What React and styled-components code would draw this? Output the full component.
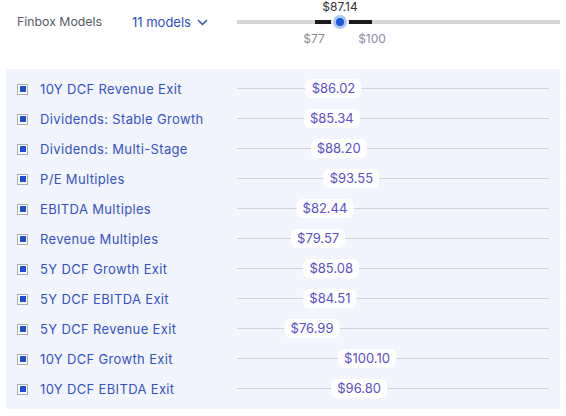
import React from "react";
import styled, { createGlobalStyle } from "styled-components";

const Global = createGlobalStyle`
  html, body { margin: 0; padding: 0; background: #fff; }
  body { font-family: Inter, "Noto Sans", sans-serif; }
`;

const Page = styled.div`
  width: 566px;
  height: 416px;
  display: flex;
  flex-direction: column;
`;

const Header = styled.div`
  height: 69px;
  display: grid;
  grid-template-columns: 115px 105px 1fr;
  padding-left: 17px;
  padding-right: 6px;
  align-items: start;
  box-sizing: border-box;
`;

const Title = styled.div`
  font-size: 12.3px;
  color: #555a66;
  line-height: 16px;
  margin-top: 14px;
`;

const Picker = styled.button`
  all: unset;
  display: flex;
  align-items: center;
  gap: 6px;
  font-size: 13px;
  color: #2f4fc3;
  line-height: 16px;
  margin-top: 14px;
  cursor: pointer;
`;

const Slider = styled.div`
  position: relative;
  height: 60px;
`;

const Track = styled.div`
  position: absolute;
  left: 0;
  right: 0;
  top: 20px;
  height: 4px;
  background: #d6d6d6;
`;

const Range = styled.div`
  position: absolute;
  top: 20px;
  height: 4px;
  background: #1c1c1c;
`;

const Thumb = styled.div`
  position: absolute;
  top: 15px;
  width: 14px;
  height: 14px;
  margin-left: -7px;
  border-radius: 50%;
  background: #a9c9f3;
  box-shadow: 0 0 0 2px #fff;
  &::after {
    content: "";
    position: absolute;
    left: 3px;
    top: 3px;
    width: 8px;
    height: 8px;
    border-radius: 50%;
    background: #1b57d8;
  }
`;

const SliderLabel = styled.div`
  position: absolute;
  transform: translateX(-50%);
  font-size: 12px;
  line-height: 14px;
  top: ${(p) => p.$top}px;
  color: ${(p) => p.$color};
  white-space: nowrap;
`;

const Panel = styled.div`
  margin-left: 6px;
  width: 554px;
  height: 340px;
  background: #f2f5fd;
  padding: 5px 11px;
  box-sizing: border-box;
  display: flex;
  flex-direction: column;
`;

const Row = styled.div`
  height: 30px;
  display: grid;
  grid-template-columns: 11px 185px 1fr;
  column-gap: 12px;
  align-items: center;
`;

const Check = styled.div`
  width: 11px;
  height: 11px;
  box-sizing: border-box;
  border: 1px solid #a9adb8;
  background: #fff;
  display: flex;
  align-items: center;
  justify-content: center;
  &::after {
    content: "";
    width: 6px;
    height: 6px;
    background: #1b4fd0;
  }
`;

const Label = styled.div`
  font-size: 13px;
  color: #3452c6;
  white-space: nowrap;
  letter-spacing: 0.35px;
`;

const Line = styled.div`
  position: relative;
  height: 30px;
  &::before {
    content: "";
    position: absolute;
    left: 0;
    right: 0;
    top: 14px;
    height: 1px;
    background: #d3d3d6;
  }
`;

const Pill = styled.div`
  position: absolute;
  top: 5px;
  height: 19px;
  padding: 0 6px;
  transform: translateX(-50%);
  background: #fff;
  border-radius: 6px;
  font-size: 13px;
  line-height: 19px;
  color: #5a4ecb;
  white-space: nowrap;
`;

const models = [
  ["10Y DCF Revenue Exit", 86.02],
  ["Dividends: Stable Growth", 85.34],
  ["Dividends: Multi-Stage", 88.2],
  ["P/E Multiples", 93.55],
  ["EBITDA Multiples", 82.44],
  ["Revenue Multiples", 79.57],
  ["5Y DCF Growth Exit", 85.08],
  ["5Y DCF EBITDA Exit", 84.51],
  ["5Y DCF Revenue Exit", 76.99],
  ["10Y DCF Growth Exit", 100.1],
  ["10Y DCF EBITDA Exit", 96.8],
];

const pos = (v) => 75 + (v - 76.99) * 2.38;

const Chevron = () => (
  <svg width="11" height="7" viewBox="0 0 11 7" fill="none">
    <path d="M1 1l4.5 4.5L10 1" stroke="#2f4fc3" strokeWidth="1.5" />
  </svg>
);

export default function App() {
  return (
    <Page>
      <Global />
      <Header>
        <Title>Finbox Models</Title>
        <Picker>
          11 models <Chevron />
        </Picker>
        <Slider>
          <Track />
          <Range style={{ left: 78, width: 17 }} />
          <Range style={{ left: 111, width: 24 }} />
          <SliderLabel $top={0} $color="#333" style={{ left: 103 }}>
            $87.14
          </SliderLabel>
          <Thumb style={{ left: 103 }} />
          <SliderLabel $top={32} $color="#8b8a93" style={{ left: 77 }}>
            $77
          </SliderLabel>
          <SliderLabel $top={32} $color="#8f88a8" style={{ left: 135 }}>
            $100
          </SliderLabel>
        </Slider>
      </Header>
      <Panel>
        {models.map(([name, v]) => (
          <Row key={name}>
            <Check />
            <Label>{name}</Label>
            <Line>
              <Pill style={{ left: pos(v) }}>${v.toFixed(2)}</Pill>
            </Line>
          </Row>
        ))}
      </Panel>
    </Page>
  );
}
